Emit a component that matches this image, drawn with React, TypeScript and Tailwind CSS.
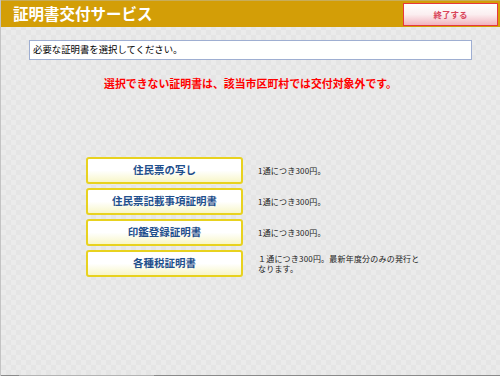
import React from "react";

const items: { label: string; desc: React.ReactNode }[] = [
  { label: "住民票の写し", desc: "1通につき300円。" },
  { label: "住民票記載事項証明書", desc: "1通につき300円。" },
  { label: "印鑑登録証明書", desc: "1通につき300円。" },
  {
    label: "各種税証明書",
    desc: (
      <>
        １通につき300円。最新年度分のみの発行と
        <br />
        なります。
      </>
    ),
  },
];

export default function App() {
  return (
    <div
      className="w-[500px] h-[376px] overflow-hidden flex flex-col border-l border-[#c4c4c4] bg-[repeating-conic-gradient(#e5e5e5_0%_25%,#ebebeb_0%_50%)] bg-[length:10px_10px]"
      style={{ fontFamily: '"Noto Sans CJK JP", "Noto Sans", sans-serif' }}
    >
      <div className="h-[27px] shrink-0 bg-[#d39e07] border-t border-[#c8ad5a] flex items-center justify-between pl-[12px] pr-[2px]">
        <div className="text-white font-bold text-[15.5px] leading-none tracking-[0px]">
          証明書交付サービス
        </div>
        <button className="w-[95px] h-[23px] border-[1.5px] border-[#e8383c] bg-gradient-to-b from-white via-[#fbeef0] to-[#f0b4bf] flex items-center justify-center text-[#d9455a] text-[8.5px] font-bold leading-none">
          終了する
        </button>
      </div>

      <div className="flex flex-col flex-1">
        <div className="mt-[13px] ml-[28px] w-[443px] h-[20px] bg-white border border-[#9eaed2] flex items-center pl-[3px] text-black text-[9.4px] leading-none">
          必要な証明書を選択してください。
        </div>

        <div className="mt-[16px] text-center text-[#ff0000] font-bold text-[10.9px] leading-[14px]">
          選択できない証明書は、該当市区町村では交付対象外です。
        </div>

        <div className="mt-[67px] ml-[85px] flex flex-col gap-[4px]">
          {items.map((it) => (
            <div key={it.label} className="flex items-center">
              <div className="w-[157px] h-[27px] rounded-[3px] border-2 border-[#e8d21f] bg-gradient-to-b from-white via-white to-[#f8f6c8] flex items-center justify-center text-[#1f4f8c] font-bold text-[10.5px] leading-none">
                {it.label}
              </div>
              <div className="ml-[15px] text-[#222] text-[8px] leading-[10px] tracking-[0.2px]">
                {it.desc}
              </div>
            </div>
          ))}
        </div>

        <div className="flex-1" />
        <div className="h-px shrink-0 flex">
          <div className="w-[18px] bg-[#8a8a8a]" />
          <div className="w-[135px] bg-[#b4b4b4]" />
          <div className="flex-1 bg-[#8a8a8a]" />
        </div>
      </div>
    </div>
  );
}
